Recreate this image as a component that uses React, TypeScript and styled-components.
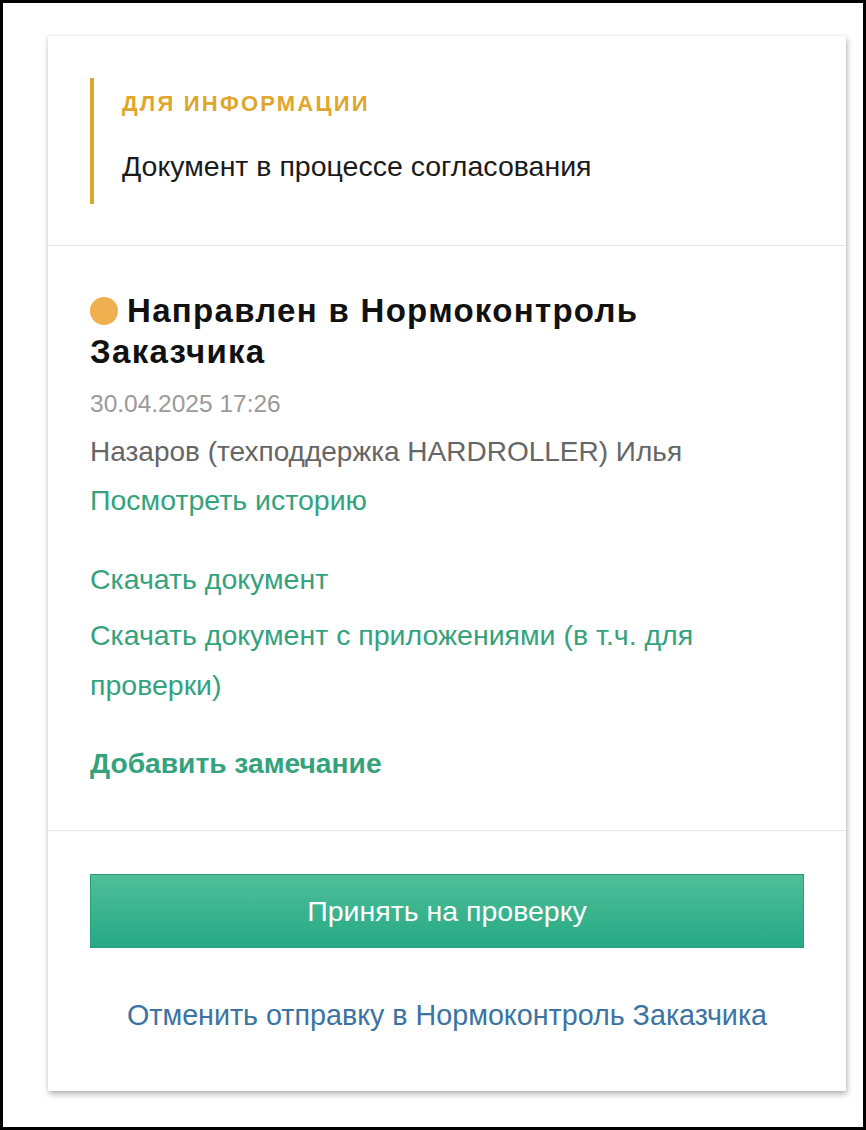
import styled, { createGlobalStyle } from "styled-components";

const GlobalStyle = createGlobalStyle`
  html, body {
    margin: 0;
    padding: 0;
    background: #fff;
  }
  body {
    font-family: "Liberation Sans", Arial, sans-serif;
  }
`;

const Frame = styled.div`
  width: 866px;
  height: 1130px;
  box-sizing: border-box;
  border: 3px solid #000;
  padding: 33px 17px 0 45px;
  background: #fff;
`;

const Card = styled.div`
  width: 798px;
  background: #fff;
  box-shadow: 1px 3px 6px rgba(0, 0, 0, 0.3), 0 0 2px rgba(0, 0, 0, 0.08);
`;

const Section = styled.div<{ $pad: string }>`
  padding: ${(p) => p.$pad};
  border-bottom: 1px solid #e6e6e6;

  &:last-child {
    border-bottom: none;
  }
`;

const Notice = styled.div`
  border-left: 4px solid #dba92e;
  padding: 12px 0 24px 28px;
`;

const NoticeTitle = styled.div`
  color: #e0a62c;
  font-size: 22px;
  font-weight: 700;
  letter-spacing: 2.2px;
  line-height: 28px;
  text-transform: uppercase;
`;

const NoticeText = styled.div`
  margin-top: 34px;
  color: #1a1a1a;
  font-size: 28.5px;
  line-height: 28px;
`;

const Title = styled.h2`
  margin: 0;
  color: #111;
  font-size: 33px;
  font-weight: 700;
  letter-spacing: 1.3px;
  line-height: 41px;
`;

const Dot = styled.span`
  display: inline-block;
  width: 28px;
  height: 28px;
  border-radius: 50%;
  background: #f0b04f;
  margin-right: 9px;
  vertical-align: -3px;
`;

const Meta = styled.div<{ $size: number; $color: string }>`
  color: ${(p) => p.$color};
  font-size: ${(p) => p.$size}px;
  line-height: 48px;
`;

const DateLine = styled(Meta)`
  margin-top: 8px;
`;

const LinkText = styled.a<{ $bold?: boolean }>`
  display: block;
  color: #34a27c;
  font-size: ${(p) => (p.$bold ? 28.2 : 28.5)}px;
  font-weight: ${(p) => (p.$bold ? 700 : 400)};
  line-height: 50px;
  text-decoration: none;
  cursor: pointer;
`;

const HistoryLink = styled(LinkText)`
  line-height: 48px;
`;

const Links = styled.div<{ $gap: number }>`
  display: flex;
  flex-direction: column;
  gap: 6px;
  margin-top: ${(p) => p.$gap}px;
`;

const AcceptButton = styled.button`
  display: block;
  width: 100%;
  height: 74px;
  border: 1px solid #25a07b;
  background: linear-gradient(#50bf98, #25a984);
  color: #fff;
  font-family: "Liberation Sans", Arial, sans-serif;
  font-size: 28.5px;
  cursor: pointer;
`;

const CancelLink = styled.a`
  display: block;
  margin-top: 50px;
  text-align: center;
  color: #3b74a3;
  font-size: 28.7px;
  line-height: 34px;
  cursor: pointer;
`;

export default function App() {
  return (
    <>
      <GlobalStyle />
      <Frame>
        <Card>
          <Section $pad="42px 42px 41px">
            <Notice>
              <NoticeTitle>Для информации</NoticeTitle>
              <NoticeText>Документ в процессе согласования</NoticeText>
            </Notice>
          </Section>
          <Section $pad="44px 42px 42px">
            <Title>
              <Dot />
              Направлен в Нормоконтроль Заказчика
            </Title>
            <DateLine $size={24.5} $color="#9a9a9a">
              30.04.2025 17:26
            </DateLine>
            <Meta $size={28} $color="#666">
              Назаров (техподдержка HARDROLLER) Илья
            </Meta>
            <HistoryLink>Посмотреть историю</HistoryLink>
            <Links $gap={30}>
              <LinkText>Скачать документ</LinkText>
              <LinkText>Скачать документ с приложениями (в т.ч. для проверки)</LinkText>
            </Links>
            <Links $gap={28}>
              <LinkText $bold>Добавить замечание</LinkText>
            </Links>
          </Section>
          <Section $pad="43px 42px 59px">
            <AcceptButton>Принять на проверку</AcceptButton>
            <CancelLink>Отменить отправку в Нормоконтроль Заказчика</CancelLink>
          </Section>
        </Card>
      </Frame>
    </>
  );
}
